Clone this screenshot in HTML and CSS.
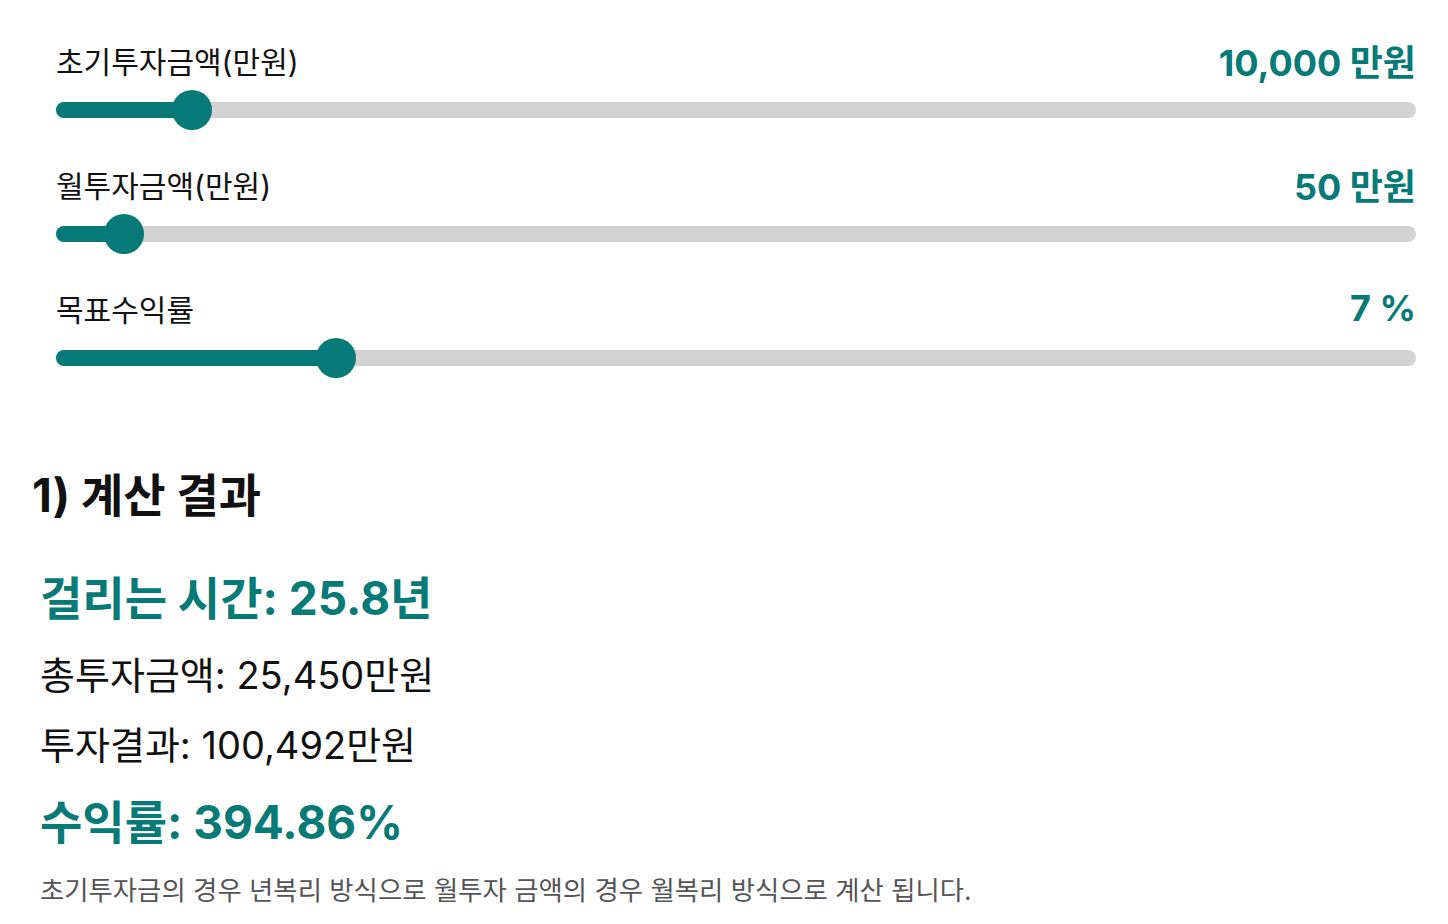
FILE: index.html
```html
<!DOCTYPE html>
<html lang="ko">
<head>
    <meta charset="UTF-8">
    <meta name="viewport" content="width=device-width, initial-scale=1.0">
    <title>투자 계산기</title>
    <link rel="stylesheet" href="styles.css">
</head>
<body>
    <div class="sliders">
        <div class="slider-group">
            <div class="slider-head">
                <span class="slider-label">초기투자금액(만원)</span>
                <span class="slider-value">10,000 만원</span>
            </div>
            <div class="track">
                <div class="fill" style="width: 136px;"></div>
                <div class="thumb" style="left: 116px;"></div>
            </div>
        </div>

        <div class="slider-group">
            <div class="slider-head">
                <span class="slider-label">월투자금액(만원)</span>
                <span class="slider-value">50 만원</span>
            </div>
            <div class="track">
                <div class="fill" style="width: 68px;"></div>
                <div class="thumb" style="left: 48px;"></div>
            </div>
        </div>

        <div class="slider-group">
            <div class="slider-head">
                <span class="slider-label">목표수익률</span>
                <span class="slider-value">7 %</span>
            </div>
            <div class="track">
                <div class="fill" style="width: 280px;"></div>
                <div class="thumb" style="left: 260px;"></div>
            </div>
        </div>
    </div>

    <!-- 계산 결과 -->
    <h2 class="result-title">1) 계산 결과</h2>
    <div class="result">
        <p class="highlight">걸리는 시간: 25.8년</p>
        <p class="line">총투자금액: 25,450만원</p>
        <p class="line">투자결과: 100,492만원</p>
        <p class="highlight">수익률: 394.86%</p>
        <p class="note">초기투자금의 경우 년복리 방식으로 월투자 금액의 경우 월복리 방식으로 계산 됩니다.</p>
    </div>
</body>
</html>
```

FILE: styles.css
```css
/* General Styles */
body {
    font-family: 'Inter', 'Noto Sans CJK KR', sans-serif;
    margin: 0;
    padding: 0 32px 0 32px;
    color: #111;
    background: #fff;
}

.sliders {
    padding: 38px 0 0 24px;
}

.slider-group {
    margin-bottom: 44px;
}

.slider-head {
    display: flex;
    justify-content: space-between;
    align-items: center;
    height: 44px;
    margin-bottom: 20px;
}

.slider-label {
    font-size: 30px;
    color: #111;
}

.slider-value {
    font-size: 36px;
    font-weight: bold;
    color: #057a76;
}

.track {
    position: relative;
    height: 16px;
    border-radius: 8px;
    background: #d3d3d3;
}

.fill {
    height: 100%;
    border-radius: 8px;
    background: #057a76;
}

.thumb {
    position: absolute;
    top: -12px;
    width: 40px;
    height: 40px;
    border-radius: 50%;
    background: #057a76;
}

.result-title {
    margin: 99px 0 0 0;
    font-size: 46px;
    font-weight: bold;
    line-height: 60px;
}

.result {
    padding: 31px 0 0 8px;
}

.result p {
    margin: 0;
}

.highlight {
    font-size: 46px;
    font-weight: bold;
    color: #057a76;
    line-height: 84px;
}

.line {
    font-size: 38px;
    line-height: 70px;
}

.result .note {
    margin-top: 6px;
    font-size: 26.4px;
    color: #555;
    line-height: 40px;
}
```
